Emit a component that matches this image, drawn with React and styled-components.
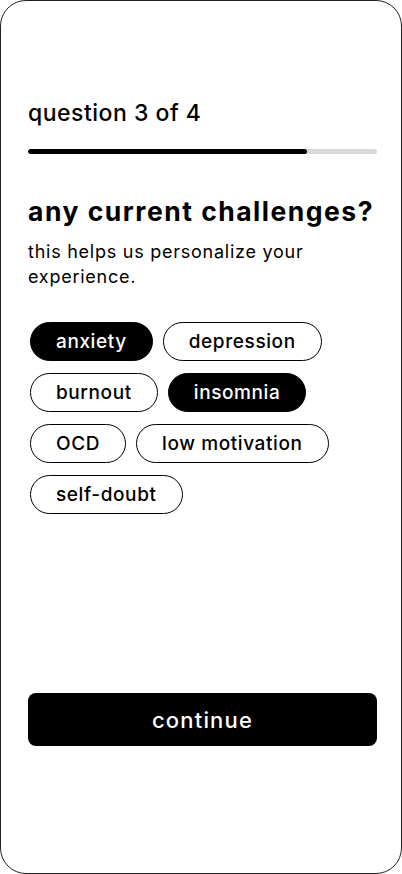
import styled, { createGlobalStyle } from "styled-components";

const GlobalStyle = createGlobalStyle`
  html, body {
    margin: 0;
    padding: 0;
    background: #fff;
  }
  body {
    font-family: Inter, "Noto Sans", sans-serif;
    color: #000;
  }
`;

const Frame = styled.div`
  box-sizing: border-box;
  width: 402px;
  height: 874px;
  border: 1px solid #222;
  border-radius: 26px;
  padding: 96px 24px 127px 27px;
  display: flex;
  flex-direction: column;
`;

const Step = styled.p`
  margin: 0;
  font-size: 23px;
  font-weight: 500;
  letter-spacing: 0.5px;
  line-height: 32px;
`;

const Track = styled.div`
  margin-top: 20px;
  height: 5px;
  background: #d9d9d9;
  border-radius: 3px;
  overflow: hidden;
`;

const Fill = styled.div`
  height: 100%;
  background: #000;
  border-radius: 3px;
`;

const Title = styled.h1`
  margin: 40px 0 0;
  font-size: 26.5px;
  font-weight: 700;
  letter-spacing: 1.5px;
  line-height: 34px;
  white-space: nowrap;
`;

const Subtitle = styled.p`
  margin: 11px 0 0;
  font-size: 18px;
  font-weight: 400;
  letter-spacing: 0.75px;
  line-height: 25px;
`;

const Chips = styled.div`
  margin-top: 33px;
  padding-left: 2px;
  display: flex;
  flex-wrap: wrap;
  gap: 12px 10px;
  max-width: 330px;
`;

const Chip = styled.button`
  box-sizing: border-box;
  height: 39px;
  padding: 0 25px;
  border-radius: 20px;
  border: 1px solid #000;
  background: ${(p) => (p.$on ? "#000" : "#fff")};
  color: ${(p) => (p.$on ? "#fff" : "#000")};
  font-family: inherit;
  font-size: 19px;
  font-weight: 500;
  letter-spacing: 0.6px;
  cursor: pointer;
`;

const Continue = styled.button`
  margin-top: auto;
  height: 53px;
  border: none;
  border-radius: 8px;
  background: #000;
  color: #fff;
  font-family: inherit;
  font-size: 22px;
  font-weight: 500;
  letter-spacing: 1.2px;
  cursor: pointer;
`;

const options = [
  { label: "anxiety", on: true },
  { label: "depression" },
  { label: "burnout" },
  { label: "insomnia", on: true },
  { label: "OCD" },
  { label: "low motivation" },
  { label: "self-doubt" },
];

export default function App() {
  const step = 3;
  const total = 4;
  return (
    <>
      <GlobalStyle />
      <Frame>
        <Step>
          question {step} of {total}
        </Step>
        <Track>
          <Fill style={{ width: "80%" }} />
        </Track>
        <Title>any current challenges?</Title>
        <Subtitle>this helps us personalize your experience.</Subtitle>
        <Chips>
          {options.map((o) => (
            <Chip key={o.label} $on={o.on}>
              {o.label}
            </Chip>
          ))}
        </Chips>
        <Continue>continue</Continue>
      </Frame>
    </>
  );
}
